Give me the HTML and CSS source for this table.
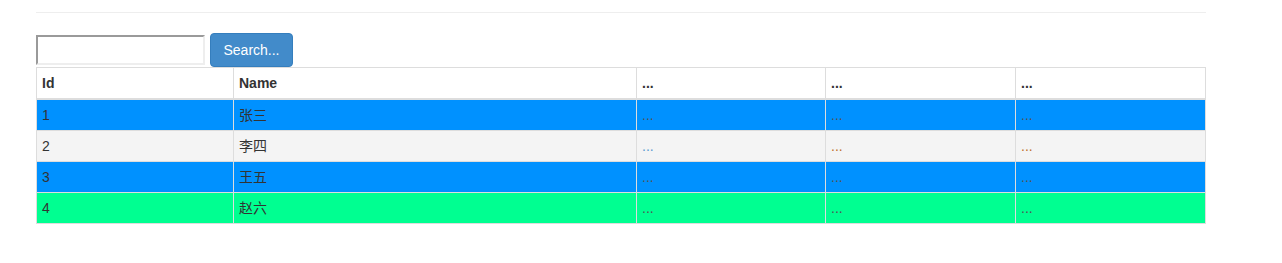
FILE: index.html
```html
<!DOCTYPE html>
<html>
<head>
<meta charset="utf-8">
<link rel="stylesheet" href="styles.css">
</head>
<body>
<div class="page">
  <hr class="rule">
  <div class="search">
    <input class="search-input" type="text">
    <button class="btn" type="button">Search...</button>
  </div>
  <table class="grid">
    <colgroup>
      <col class="c1"><col class="c2"><col class="c3"><col class="c4"><col class="c5">
    </colgroup>
    <thead>
      <tr><th>Id</th><th>Name</th><th>...</th><th>...</th><th>...</th></tr>
    </thead>
    <tbody>
      <tr class="blue"><td>1</td><td>张三</td><td class="dots">...</td><td class="dots">...</td><td class="dots">...</td></tr>
      <tr class="grey"><td>2</td><td>李四</td><td class="dots d-blue">...</td><td class="dots d-orange">...</td><td class="dots d-orange">...</td></tr>
      <tr class="blue"><td>3</td><td>王五</td><td class="dots">...</td><td class="dots">...</td><td class="dots">...</td></tr>
      <tr class="green"><td>4</td><td>赵六</td><td class="dots">...</td><td class="dots">...</td><td class="dots">...</td></tr>
    </tbody>
  </table>
</div>
</body>
</html>
```
FILE: styles.css
```css
html, body {
  margin: 0;
  padding: 0;
  background: #fff;
}
body {
  font-family: "Liberation Sans", Arial, "Noto Sans CJK SC", sans-serif;
  font-size: 14px;
  line-height: 20px;
  color: #333;
}
.page {
  width: 1170px;
  margin-left: 36px;
  padding-top: 12px;
}
.rule {
  margin: 0 0 20px;
  border: 0;
  border-top: 1px solid #eee;
  height: 0;
}
.search {
  display: flex;
  align-items: center;
  gap: 5px;
}
.search-input {
  box-sizing: border-box;
  width: 169px;
  height: 30px;
  margin: 0;
  padding: 1px 2px;
  border-style: solid;
  border-width: 2px;
  border-color: #9a9a9a #eee #eee #9a9a9a;
  background: #fff;
  font: inherit;
}
.btn {
  box-sizing: border-box;
  width: 83px;
  height: 34px;
  margin: 0;
  padding: 6px 0;
  text-align: center;
  background: #428bca;
  border: 1px solid #357ebd;
  border-radius: 4px;
  color: #fff;
  font-family: "Liberation Sans", Arial, sans-serif;
  font-size: 14px;
  line-height: 20px;
}
.grid {
  width: 1169px;
  border-collapse: collapse;
  border: 1px solid #ddd;
  table-layout: fixed;
}
.c1 { width: 197px; }
.c2 { width: 403px; }
.c3 { width: 189px; }
.c4 { width: 190px; }
.c5 { width: 190px; }
.grid th, .grid td {
  padding: 5px;
  border: 1px solid #ddd;
  text-align: left;
  vertical-align: top;
  line-height: 20px;
}
.grid th {
  font-weight: bold;
  vertical-align: bottom;
  border-bottom: 2px solid #ddd;
  color: #333;
}
.grid tr.blue td { background: #0091ff; }
.grid tr.grey td { background: #f4f4f4; }
.grid tr.green td { background: #00ff91; }
.dots { color: #555; }
.d-blue { color: #5a9bd0; }
.d-orange { color: #c0702e; }
```
